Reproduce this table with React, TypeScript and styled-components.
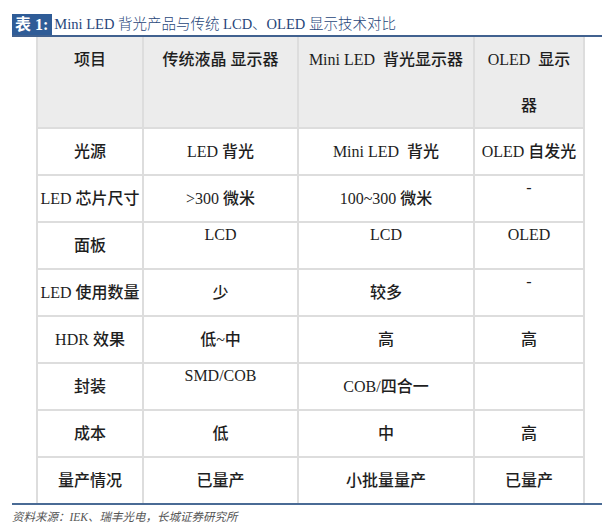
import React from "react";
import styled, { createGlobalStyle } from "styled-components";

const Global = createGlobalStyle`
  html, body { margin: 0; padding: 0; background: #ffffff; }
  body { font-family: "Liberation Serif", "Noto Sans CJK SC", serif; }
`;

const Page = styled.div`
  padding: 14px 0 0 12px;
  width: 590px;
`;

const TitleBar = styled.div`
  display: flex;
  align-items: flex-end;
  border-bottom: 2px solid #41618f;
  height: 21px;
`;

const Label = styled.span`
  background: #2f5c97;
  color: #ffffff;
  font-family: "Liberation Serif", "Noto Sans CJK SC", serif;
  font-weight: 700;
  font-size: 16px;
  height: 21px;
  line-height: 21px;
  padding: 0 4px 0 3px;
  white-space: pre;
`;

const Title = styled.span`
  color: #27467a;
  font-family: "Liberation Serif", "Noto Sans CJK SC", serif;
  font-size: 14.5px;
  font-weight: 300;
  line-height: 21px;
  margin-left: 2px;
  white-space: pre;
`;

const Grid = styled.div`
  margin-left: 24px;
  display: grid;
  grid-template-columns: 104px 153px 174px 108px;
  grid-template-rows: 90px repeat(8, 45px);
  gap: 2px;
  padding: 0 2px;
  background: #dddddd;
  width: 545px;
`;

const Cell = styled.div<{ $head?: boolean; $top?: boolean }>`
  background: ${(p) => (p.$head ? "#ececec" : "#ffffff")};
  color: #1e1e1e;
  font-family: "Liberation Serif", "Noto Sans CJK SC", serif;
  font-size: 16px;
  font-weight: 500;
  display: flex;
  justify-content: center;
  align-items: ${(p) => (p.$head || p.$top ? "flex-start" : "center")};
  text-align: center;
  white-space: pre-wrap;
  line-height: ${(p) => (p.$head ? "46px" : "22px")};
  padding-top: ${(p) => (p.$top ? "1px" : "0")};
`;

const BottomRule = styled.div`
  height: 2px;
  background: #4a6b95;
  width: 590px;
`;

const Source = styled.div`
  margin-top: 4px;
  font-family: "Liberation Serif", "Noto Sans CJK SC", serif;
  font-style: italic;
  font-size: 11.5px;
  line-height: 16px;
  color: #555555;
`;

type C = string | { t: string; top: true };

const header = ["项目", "传统液晶 显示器", "Mini LED  背光显示器", "OLED  显示\n器"];

const rows: C[][] = [
  ["光源", "LED 背光", "Mini LED  背光", "OLED 自发光"],
  ["LED 芯片尺寸", ">300 微米", "100~300 微米", { t: "-", top: true }],
  ["面板", { t: "LCD", top: true }, { t: "LCD", top: true }, { t: "OLED", top: true }],
  ["LED 使用数量", "少", "较多", { t: "-", top: true }],
  ["HDR 效果", "低~中", "高", "高"],
  ["封装", { t: "SMD/COB", top: true }, "COB/四合一", ""],
  ["成本", "低", "中", "高"],
  ["量产情况", "已量产", "小批量量产", "已量产"],
];

export default function App() {
  return (
    <>
      <Global />
      <Page>
        <TitleBar>
          <Label>表 1:</Label>
          <Title>Mini LED 背光产品与传统 LCD、OLED 显示技术对比</Title>
        </TitleBar>
        <Grid>
          {header.map((h, i) => (
            <Cell key={"h" + i} $head>
              {h}
            </Cell>
          ))}
          {rows.map((r, ri) =>
            r.map((c, ci) =>
              typeof c === "string" ? (
                <Cell key={ri + "-" + ci}>{c}</Cell>
              ) : (
                <Cell key={ri + "-" + ci} $top>
                  {c.t}
                </Cell>
              )
            )
          )}
        </Grid>
        <BottomRule />
        <Source>资料来源：IEK、瑞丰光电，长城证券研究所</Source>
      </Page>
    </>
  );
}
